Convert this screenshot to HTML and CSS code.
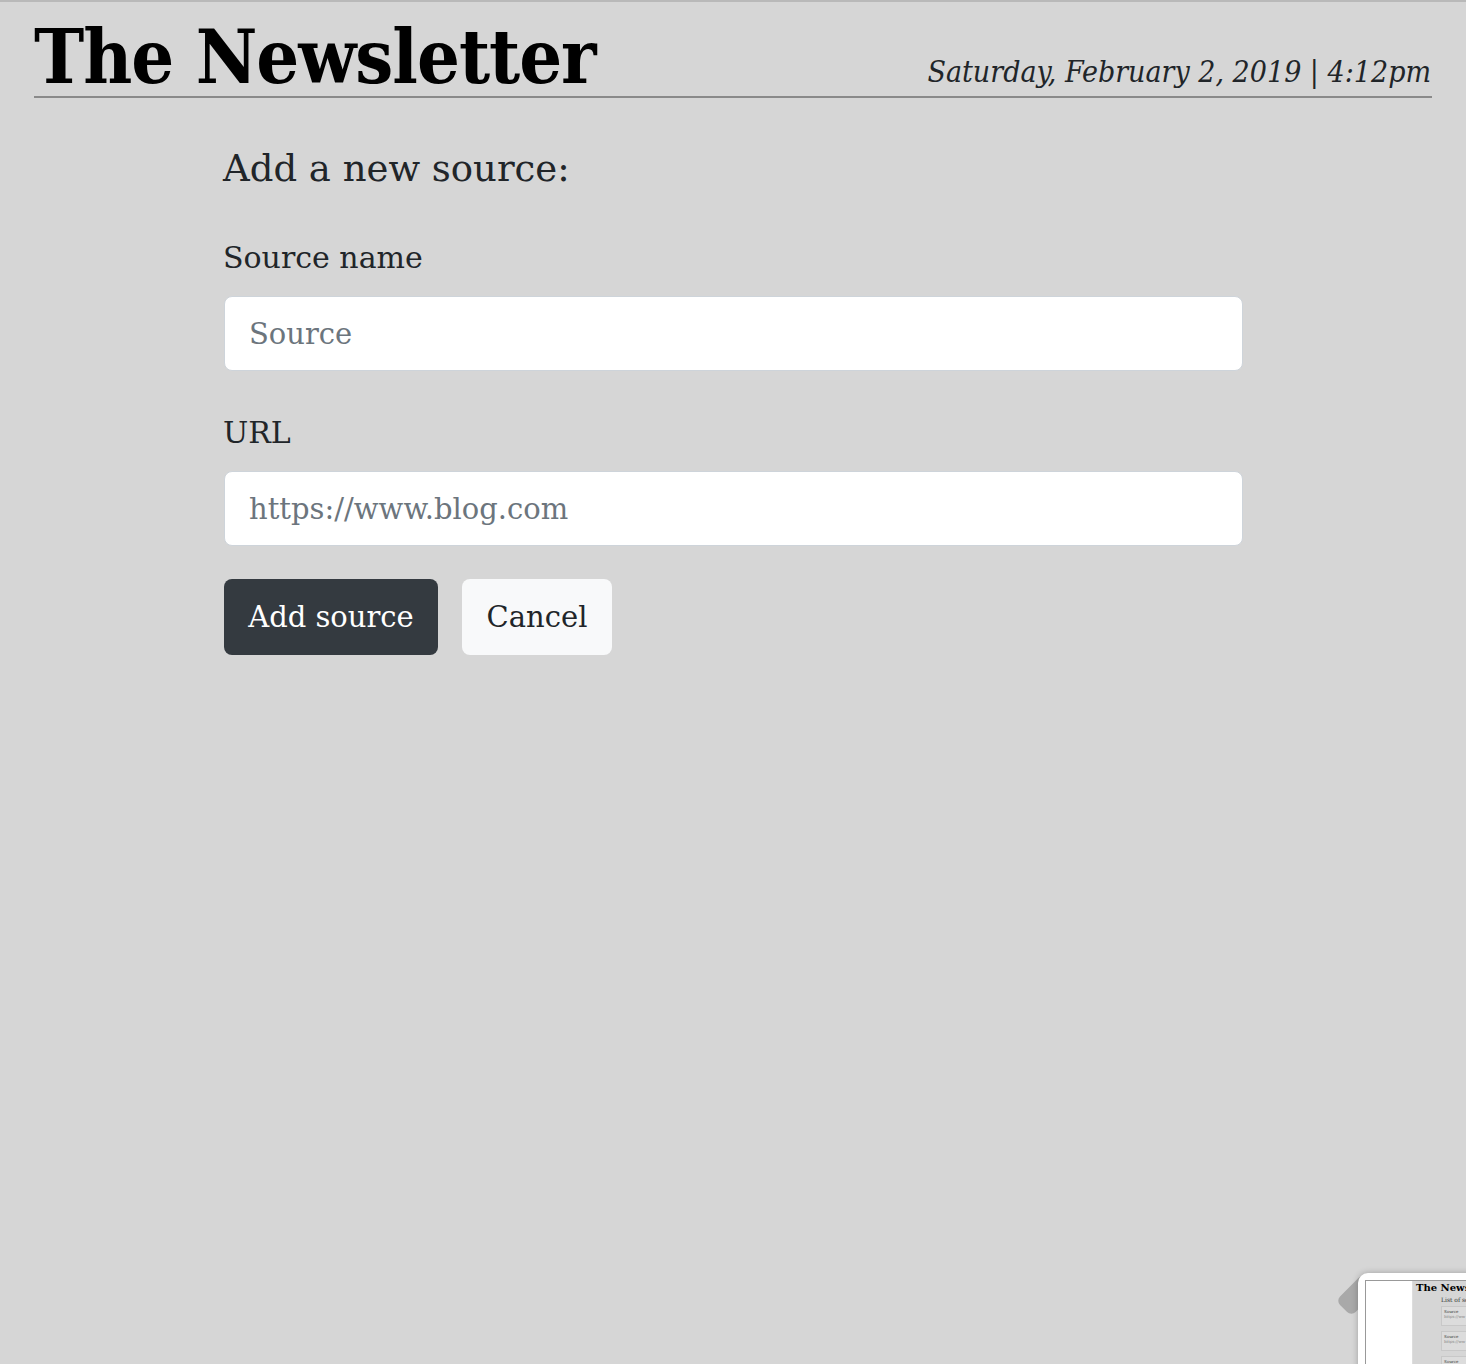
FILE: index.html
```html
<!DOCTYPE html>
<html lang="en">
<head>
<meta charset="utf-8">
<title>The Newsletter</title>
<link rel="stylesheet" href="styles.css">
</head>
<body>
<header class="masthead">
  <h1 class="title">The Newsletter</h1>
  <div class="dateline">Saturday, February 2, 2019 | 4:12pm</div>
</header>
<main class="content">
  <h2 class="form-title">Add a new source:</h2>
  <form class="source-form">
    <div class="form-group">
      <label class="label" for="name">Source name</label>
      <input class="input" id="name" type="text" placeholder="Source">
    </div>
    <div class="form-group form-group-last">
      <label class="label" for="url">URL</label>
      <input class="input" id="url" type="text" placeholder="https://www.blog.com">
    </div>
    <div class="actions">
      <button type="button" class="btn btn-dark">Add source</button>
      <button type="button" class="btn btn-light">Cancel</button>
    </div>
  </form>
</main>
<div class="thumb-shadow"></div>
<div class="thumb">
  <div class="thumb-inner">
    <div class="thumb-side"></div>
    <div class="thumb-page">
      <div class="thumb-title">The News</div>
      <div class="thumb-sub">List of so</div>
      <div class="thumb-card"><div>Source</div><div class="u">https://ww</div></div>
      <div class="thumb-card"><div>Source</div><div class="u">https://ww</div></div>
      <div class="thumb-card"><div>Source</div><div class="u">https://ww</div></div>
    </div>
  </div>
</div>
</body>
</html>
```

FILE: styles.css
```css
html, body {
  margin: 0;
  padding: 0;
}
body {
  background: #d6d6d6;
  border-top: 2px solid #b9b9b9;
  min-height: 1362px;
  font-family: "DejaVu Serif", serif;
  color: #212529;
  overflow: hidden;
  position: relative;
}
.masthead {
  margin: 0 34px;
  display: flex;
  justify-content: space-between;
  align-items: flex-end;
  border-bottom: 2px solid #8a8a8a;
  height: 94px;
}
.title {
  margin: 0;
  font-family: "DejaVu Serif Condensed", "DejaVu Serif", serif;
  font-weight: bold;
  font-size: 75px;
  line-height: 1;
  color: #000;
  letter-spacing: -1px;
  padding-bottom: 1px;
}
.dateline {
  font-family: "DejaVu Serif Condensed", "DejaVu Serif", serif;
  font-style: italic;
  font-weight: 300;
  font-size: 30px;
  color: #212529;
  padding-bottom: 7px;
  margin-right: 1px;
}
.content {
  width: 1020px;
  margin: 0 auto;
}
.form-title {
  margin: 49px 0 44px;
  font-weight: normal;
  font-size: 37px;
  line-height: 1.2;
}
.form-group {
  margin-bottom: 39px;
}
.form-group-last {
  margin-bottom: 33px;
}
.label {
  display: block;
  font-size: 30px;
  line-height: 1.5;
  margin-bottom: 16px;
}
.input {
  display: block;
  box-sizing: border-box;
  width: 1019px;
  height: 75px;
  margin-left: 1px;
  border: 1px solid #ced4da;
  border-radius: 8px;
  background: #fff;
  padding: 0 24px;
  font-family: "DejaVu Serif", serif;
  font-size: 29px;
  color: #495057;
  outline: none;
}
.input::placeholder {
  color: #6c757d;
}
.actions {
  display: flex;
  gap: 24px;
}
.btn {
  height: 76px;
  border: 0;
  border-radius: 8px;
  padding: 0 20px;
  font-family: "DejaVu Serif", serif;
  font-size: 29px;
  cursor: pointer;
}
.btn-dark {
  background: #343a40;
  color: #fff;
  width: 214px;
  margin-left: 1px;
}
.btn-light {
  background: #f8f9fa;
  color: #212529;
  width: 150px;
}
.thumb-shadow {
  position: absolute;
  left: 1346px;
  top: 1274px;
  width: 22px;
  height: 38px;
  background: #a9a9a9;
  border-radius: 6px;
  transform: rotate(45deg);
}
.thumb {
  position: absolute;
  left: 1358px;
  top: 1271px;
  width: 140px;
  height: 120px;
  background: #fff;
  border-radius: 10px;
  box-shadow: 0 0 6px rgba(0,0,0,0.25);
  padding: 7px;
  box-sizing: border-box;
}
.thumb-inner {
  display: flex;
  height: 100%;
  border: 1px solid #999;
}
.thumb-side {
  width: 46px;
  background: #fff;
  border-right: 1px solid #ddd;
}
.thumb-page {
  flex: 1;
  background: #d6d6d6;
  padding: 1px 3px;
  font-size: 4px;
  color: #333;
  overflow: hidden;
}
.thumb-title {
  font-weight: bold;
  font-size: 10px;
  color: #000;
  white-space: nowrap;
}
.thumb-sub {
  margin: 3px 0 3px 25px;
  font-size: 6px;
  white-space: nowrap;
}
.thumb-card {
  margin: 0 0 5px 25px;
  background: #dcdcdc;
  border: 1px solid #c8c8c8;
  padding: 2px;
  height: 14px;
  white-space: nowrap;
}
.thumb-card .u {
  color: #888;
}
```
